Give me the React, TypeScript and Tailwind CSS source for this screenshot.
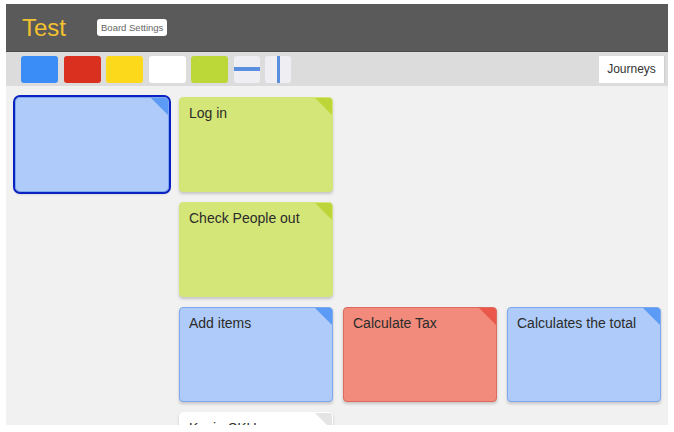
type Color = 'blue' | 'green' | 'red' | 'white';

const CARD_STYLES: Record<Color, { card: string; corner: string }> = {
  blue: { card: 'bg-[#aecbfa] border-[#7ea8ec]', corner: 'border-t-[#5b9bf6]' },
  green: { card: 'bg-[#d5e678] border-[#d5e678]', corner: 'border-t-[#bed53a]' },
  red: { card: 'bg-[#f28b7b] border-[#dd6a5c]', corner: 'border-t-[#e9584a]' },
  white: { card: 'bg-white border-white', corner: 'border-t-[#e4e4e4]' },
};

type Note = { text: string; color: Color; pos: string; selected?: boolean };

const NOTES: Note[] = [
  { text: '', color: 'blue', pos: 'col-start-1 row-start-1', selected: true },
  { text: 'Log in', color: 'green', pos: 'col-start-2 row-start-1' },
  { text: 'Check People out', color: 'green', pos: 'col-start-2 row-start-2' },
  { text: 'Add items', color: 'blue', pos: 'col-start-2 row-start-3' },
  { text: 'Calculate Tax', color: 'red', pos: 'col-start-3 row-start-3' },
  { text: 'Calculates the total', color: 'blue', pos: 'col-start-4 row-start-3' },
  { text: 'Kevin SKU', color: 'white', pos: 'col-start-2 row-start-4' },
];

function StickyNote({ note }: { note: Note }) {
  const s = CARD_STYLES[note.color];
  return (
    <div
      className={`relative h-[95px] rounded-[4px] border shadow-[0_2px_3px_rgba(0,0,0,0.18)] ${s.card} ${note.pos} ${
        note.selected ? 'outline-2 outline-[#0a22c4] outline-offset-0 rounded-[5px]' : ''
      }`}
    >
      <div className={`absolute top-0 right-0 w-0 h-0 border-t-[17px] border-l-[17px] border-l-transparent rounded-tr-[3px] ${s.corner}`} />
      <div className="px-[9px] pt-[6px] text-[14px] leading-[18px] text-[#2b2b2b]">{note.text}</div>
    </div>
  );
}

export default function App() {
  const swatches = ['bg-[#3a8cf6]', 'bg-[#d93020]', 'bg-[#fcd91a]', 'bg-white', 'bg-[#bcd838]'];
  return (
    <div className="w-[674px] h-[432px] bg-white pt-[4px] px-[6px] overflow-hidden" style={{ fontFamily: '"Liberation Sans", Arial, sans-serif' }}>
      <header className="h-[48px] bg-[#5a5a5a] border-b border-[#4a4a4a] flex items-center pl-[16px]">
        <h1 className="text-[24px] text-[#f2c230] leading-none">Test</h1>
        <button className="ml-[31px] h-[17px] px-[4px] bg-white rounded-[3px] text-[9.5px] text-[#666] leading-none">
          Board Settings
        </button>
      </header>

      <div className="h-[34px] bg-[#dcdcdc] flex items-center pl-[15px]">
        <div className="flex gap-[5.5px]">
          {swatches.map((c) => (
            <div key={c} className={`w-[37px] h-[27px] rounded-[3px] ${c}`} />
          ))}
          <div className="w-[26px] h-[27px] rounded-[3px] bg-[#eeeef3] flex items-center">
            <div className="w-full h-[4px] bg-[#5a8fe0]" />
          </div>
          <div className="w-[26px] h-[27px] rounded-[3px] bg-[#eeeef3] flex justify-center">
            <div className="w-[3px] h-full bg-[#5a8fe0]" />
          </div>
        </div>
        <div className="ml-auto mr-[3px] h-[27px] w-[66px] bg-white border-r border-[#cfcfcf] flex items-center justify-center text-[12px] text-[#333]">
          Journeys
        </div>
      </div>

      <main className="h-[339px] bg-[#f1f1f1] pl-[9px] pt-[11px] overflow-hidden">
        <div className="grid grid-cols-[154px_154px_154px_154px] auto-rows-[95px] gap-x-[10px] gap-y-[10px]">
          {NOTES.map((n) => (
            <StickyNote key={n.text + n.pos} note={n} />
          ))}
        </div>
      </main>
    </div>
  );
}
